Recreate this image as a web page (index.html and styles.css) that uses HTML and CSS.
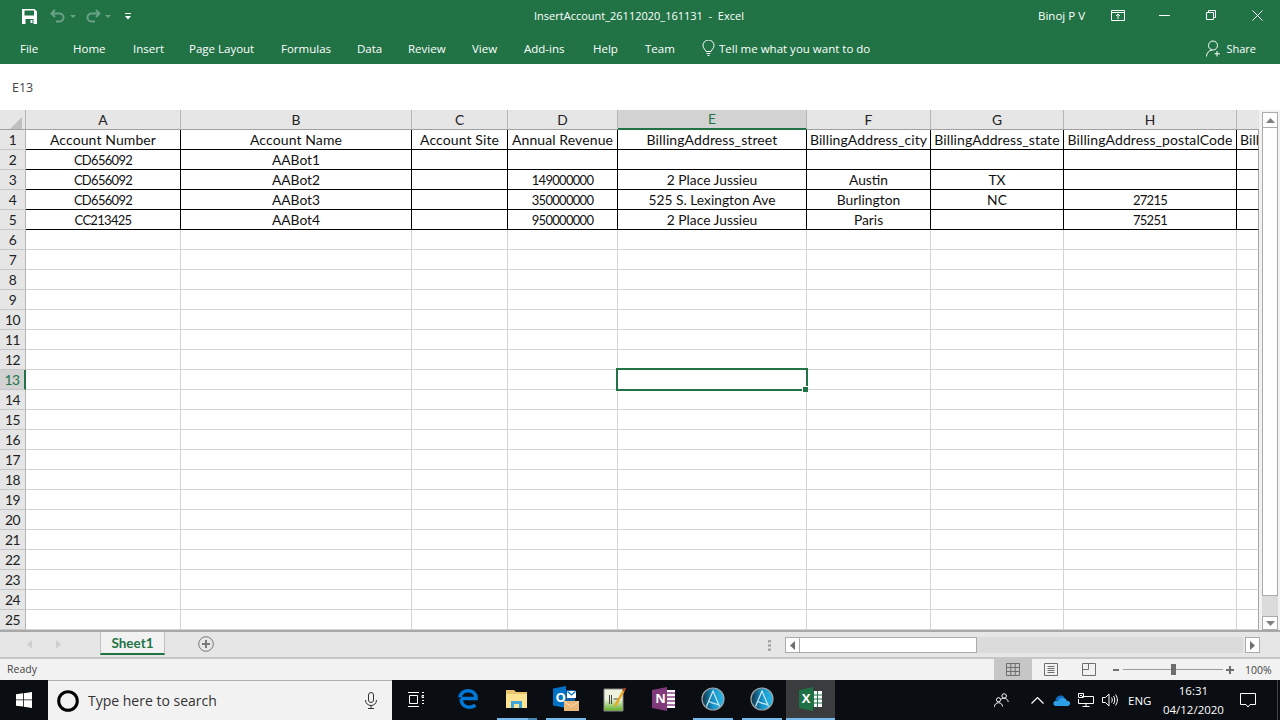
FILE: index.html
```html
<!DOCTYPE html>
<html lang="en">
<head>
<meta charset="utf-8">
<title>InsertAccount_26112020_161131 - Excel</title>
<link rel="stylesheet" href="styles.css">
</head>
<body>
<div class="app">
  <header class="titlebar">
    <div class="qat">
      <svg class="i-save" width="15" height="15" viewBox="0 0 15 15"><path fill="#fff" d="M0 0h12.500L15 2.500V15H0z"/><path fill="#217346" d="M2.500 1.500h9.500v5h-9.500zM3.500 10h8v5h-8z"/><path fill="#fff" d="M8.500 11h2v3h-2z"/></svg>
      <svg class="i-undo" width="16" height="14" viewBox="0 0 16 14" fill="none" stroke="#6aa287" stroke-width="2"><path d="M5 1 1.500 4.500 5 8M2 4.500h7.500a4 4 0 0 1 0 8H6"/></svg>
      <svg class="i-caret" width="6" height="4" viewBox="0 0 6 4"><path fill="#6aa287" d="M0 0h6L3 3z"/></svg>
      <svg class="i-redo" width="16" height="14" viewBox="0 0 16 14" fill="none" stroke="#6aa287" stroke-width="2"><path d="M11 1l3.500 3.500L11 8M14 4.500H6.500a4 4 0 0 0 0 8H10"/></svg>
      <svg class="i-caret" width="6" height="4" viewBox="0 0 6 4"><path fill="#6aa287" d="M0 0h6L3 3z"/></svg>
      <svg class="i-custom" width="6" height="7" viewBox="0 0 6 7"><path fill="#fff" d="M0 0h6v1H0zM0 3h6L3 6.500z"/></svg>
    </div>
    <div class="doc-title">InsertAccount_26112020_161131  -  Excel</div>
    <div class="win">
      <span class="user">Binoj P V</span>
      <svg class="i-display" width="14" height="11" viewBox="0 0 14 11" fill="none" stroke="#fff"><path d="M.5.500h13v10H.500zM.5 2.500h13M7 9V4.500M5 6l2-2 2 2"/></svg>
      <svg class="i-min" width="11" height="1" viewBox="0 0 11 1"><path fill="#fff" d="M0 0h11v1H0z"/></svg>
      <svg class="i-restore" width="10" height="10" viewBox="0 0 10 10" fill="none" stroke="#fff"><path d="M.5 2.500h7v7h-7zM2.500 2.500v-2h7v7h-2"/></svg>
      <svg class="i-close" width="11" height="11" viewBox="0 0 11 11" fill="none" stroke="#fff"><path d="M.5.500l10 10M10.500.500l-10 10"/></svg>
    </div>
  </header>

  <nav class="ribbon">
    <span>File</span><span>Home</span><span>Insert</span><span>Page Layout</span><span>Formulas</span><span>Data</span><span>Review</span><span>View</span><span>Add-ins</span><span>Help</span><span>Team</span>
    <span class="tell">
      <svg width="13" height="16" viewBox="0 0 13 16" fill="none" stroke="#fff"><path d="M4 11.500C3.500 9.500 1 8.500 1 5.500a5.500 5.500 0 0 1 11 0c0 3-2.500 4-3 6zM4.500 13.500h4M5.500 15.500h2"/></svg>
      Tell me what you want to do
    </span>
    <span class="share">
      <svg width="15" height="17" viewBox="0 0 15 17" fill="none" stroke="#fff"><circle cx="7" cy="5.500" r="4.500"/><path d="M.5 16.500c0-3.500 2.500-6 5.500-6.500M11 11v5.500M8.500 13.800h5.500"/></svg>
      <span class="share-label">Share</span>
    </span>
  </nav>

  <div class="formula"><span>E13</span></div>

  <div class="sheet">
    <table class="grid">
      <colgroup>
        <col class="c0"><col class="ca"><col class="cb"><col class="cc"><col class="cd"><col class="ce"><col class="cf"><col class="cg"><col class="ch"><col class="ci">
      </colgroup>
      <thead>
        <tr>
          <th class="corner"><svg width="12" height="12" viewBox="0 0 12 12"><path fill="#c0c0c0" d="M12 0v12H0z"/></svg></th>
          <th>A</th><th>B</th><th>C</th><th>D</th><th class="on">E</th><th>F</th><th>G</th><th>H</th><th></th>
        </tr>
      </thead>
      <tbody>
        <tr class="d head"><th>1</th><td>Account Number</td><td>Account Name</td><td>Account Site</td><td>Annual Revenue</td><td>BillingAddress_street</td><td>BillingAddress_city</td><td>BillingAddress_state</td><td>BillingAddress_postalCode</td><td class="clip">Bill</td></tr>
        <tr class="d"><th>2</th><td class="num">CD656092</td><td>AABot1</td><td></td><td></td><td></td><td></td><td></td><td></td><td></td></tr>
        <tr class="d"><th>3</th><td class="num">CD656092</td><td>AABot2</td><td></td><td class="num">149000000</td><td>2 Place Jussieu</td><td>Austin</td><td>TX</td><td></td><td></td></tr>
        <tr class="d"><th>4</th><td class="num">CD656092</td><td>AABot3</td><td></td><td class="num">350000000</td><td>525 S. Lexington Ave</td><td>Burlington</td><td>NC</td><td class="num">27215</td><td></td></tr>
        <tr class="d"><th>5</th><td class="num">CC213425</td><td>AABot4</td><td></td><td class="num">950000000</td><td>2 Place Jussieu</td><td>Paris</td><td></td><td class="num">75251</td><td></td></tr>
        <tr><th>6</th><td></td><td></td><td></td><td></td><td></td><td></td><td></td><td></td><td></td></tr>
        <tr><th>7</th><td></td><td></td><td></td><td></td><td></td><td></td><td></td><td></td><td></td></tr>
        <tr><th>8</th><td></td><td></td><td></td><td></td><td></td><td></td><td></td><td></td><td></td></tr>
        <tr><th>9</th><td></td><td></td><td></td><td></td><td></td><td></td><td></td><td></td><td></td></tr>
        <tr><th>10</th><td></td><td></td><td></td><td></td><td></td><td></td><td></td><td></td><td></td></tr>
        <tr><th>11</th><td></td><td></td><td></td><td></td><td></td><td></td><td></td><td></td><td></td></tr>
        <tr><th>12</th><td></td><td></td><td></td><td></td><td></td><td></td><td></td><td></td><td></td></tr>
        <tr><th class="on-row">13</th><td></td><td></td><td></td><td></td><td class="active"><div class="sel"><i class="handle"></i></div></td><td></td><td></td><td></td><td></td></tr>
        <tr><th>14</th><td></td><td></td><td></td><td></td><td></td><td></td><td></td><td></td><td></td></tr>
        <tr><th>15</th><td></td><td></td><td></td><td></td><td></td><td></td><td></td><td></td><td></td></tr>
        <tr><th>16</th><td></td><td></td><td></td><td></td><td></td><td></td><td></td><td></td><td></td></tr>
        <tr><th>17</th><td></td><td></td><td></td><td></td><td></td><td></td><td></td><td></td><td></td></tr>
        <tr><th>18</th><td></td><td></td><td></td><td></td><td></td><td></td><td></td><td></td><td></td></tr>
        <tr><th>19</th><td></td><td></td><td></td><td></td><td></td><td></td><td></td><td></td><td></td></tr>
        <tr><th>20</th><td></td><td></td><td></td><td></td><td></td><td></td><td></td><td></td><td></td></tr>
        <tr><th>21</th><td></td><td></td><td></td><td></td><td></td><td></td><td></td><td></td><td></td></tr>
        <tr><th>22</th><td></td><td></td><td></td><td></td><td></td><td></td><td></td><td></td><td></td></tr>
        <tr><th>23</th><td></td><td></td><td></td><td></td><td></td><td></td><td></td><td></td><td></td></tr>
        <tr><th>24</th><td></td><td></td><td></td><td></td><td></td><td></td><td></td><td></td><td></td></tr>
        <tr><th>25</th><td></td><td></td><td></td><td></td><td></td><td></td><td></td><td></td><td></td></tr>
      </tbody>
    </table>
    <div class="vscroll">
      <div class="sb-btn up"><svg width="9" height="5" viewBox="0 0 9 5"><path fill="#808080" d="M4.500 0 9 5H0z"/></svg></div>
      <div class="sb-thumb"></div>
      <div class="sb-track"></div>
      <div class="sb-btn down"><svg width="9" height="5" viewBox="0 0 9 5"><path fill="#808080" d="M0 0h9L4.500 5z"/></svg></div>
    </div>
  </div>

  <div class="tabs">
    <div class="nav-arrows">
      <svg width="5" height="9" viewBox="0 0 5 9"><path fill="#cfcfcf" d="M5 0v9L0 4.500z"/></svg>
      <svg width="5" height="9" viewBox="0 0 5 9"><path fill="#cfcfcf" d="M0 0v9l5-4.500z"/></svg>
    </div>
    <div class="tab">Sheet1</div>
    <svg class="add" width="16" height="16" viewBox="0 0 16 16" fill="none" stroke="#7a7a7a"><circle cx="8" cy="8" r="7.300"/><path stroke-width="2" d="M8 4v8M4 8h8"/></svg>
    <svg class="dots" width="3" height="11" viewBox="0 0 3 11"><path fill="#a8a8a8" d="M0 0h3v2.500H0zM0 4.200h3v2.500H0zM0 8.500h3V11H0z"/></svg>
    <div class="hscroll">
      <div class="sb-btn left"><svg width="5" height="9" viewBox="0 0 5 9"><path fill="#6e6e6e" d="M5 0v9L0 4.500z"/></svg></div>
      <div class="h-thumb"></div>
      <div class="h-track"></div>
      <div class="sb-btn right"><svg width="5" height="9" viewBox="0 0 5 9"><path fill="#6e6e6e" d="M0 0v9l5-4.500z"/></svg></div>
    </div>
  </div>

  <footer class="status">
    <span class="ready">Ready</span>
    <div class="views">
      <div class="view on"><svg width="14" height="13" viewBox="0 0 14 13" fill="none" stroke="#6e6e6e"><path d="M.5.500h13v12H.500zM.5 4.500h13M.5 8.500h13M4.800.500v12M9.200.500v12"/></svg></div>
      <div class="view"><svg width="14" height="13" viewBox="0 0 14 13" fill="none" stroke="#6e6e6e"><path d="M.5.500h13v12H.500zM3.500 3.500h7M3.500 5.500h7M3.500 7.500h7M3.500 9.500h7"/></svg></div>
      <div class="view"><svg width="14" height="13" viewBox="0 0 14 13" fill="none" stroke="#6e6e6e"><path d="M.5.500h13v12H.500zM6.500.500v6h-6"/></svg></div>
    </div>
    <div class="zoom">
      <svg width="6" height="2" viewBox="0 0 6 2"><path fill="#6e6e6e" d="M0 0h6v2H0z"/></svg>
      <div class="slider"><i class="knob"></i></div>
      <svg width="8" height="8" viewBox="0 0 8 8"><path fill="#6e6e6e" d="M3 0h2v3h3v2H5v3H3V5H0V3h3z"/></svg>
      <span class="pct">100%</span>
    </div>
  </footer>

  <div class="taskbar">
    <div class="start"><svg width="16" height="16" viewBox="0 0 16 16"><path fill="#fff" d="M0 2.300 7 1.300v6.200H0zM7.800 1.200 16 0v7.500H7.800zM0 8.300h7v6.300L0 13.700zM7.800 8.300H16V16l-8.200-1.200z"/></svg></div>
    <div class="search">
      <svg width="22" height="22" viewBox="0 0 22 22" fill="none"><circle cx="11" cy="11" r="9.300" stroke="#000" stroke-width="3"/></svg>
      <span class="ph">Type here to search</span>
      <svg class="mic" width="12" height="17" viewBox="0 0 12 17" fill="none" stroke="#333"><rect x="3.500" y=".5" width="5" height="10" rx="2.500"/><path d="M.5 8c0 3.500 2.500 5.500 5.500 5.500s5.500-2 5.500-5.500M6 13.500v3M3 16.500h6"/></svg>
    </div>
    <div class="apps">
      <div class="app-btn tv"><svg width="16" height="15" viewBox="0 0 16 15" fill="none" stroke="#fff"><path d="M0 .5h11M0 14.500h11M1.500 3.500h8v8h-8zM14 .5h2M14 3.500h2v2h-2zM14 8.500h2M14 11.500h2"/></svg></div>
      <div class="app-btn"><svg width="20" height="20" viewBox="0 0 20 20" fill="none" stroke="#0078d7" stroke-width="3.600"><path d="M3 9.500h15c.3-4.500-3-7.700-7.500-7.700C6 1.800 2.800 4.700 1.800 8.500M3.300 9.800c-.3 5 3 8.400 7.500 8.400 2.700 0 4.800-.7 6.700-2"/></svg></div>
      <div class="app-btn open-split"><svg width="22" height="20" viewBox="0 0 22 20"><path fill="#e8c56d" d="M0 1h8l2 2h11v16H0z"/><path fill="#fde391" d="M0 5h21v14H0z"/><path fill="#3fa6dd" d="M5 12h11v7h-3v-4H8v4H5z"/></svg></div>
      <div class="app-btn open"><svg width="26" height="26" viewBox="0 0 26 26"><path fill="#0072c6" d="M0 2.500 13 0v22L0 19.500z"/><path fill="#0f5ea5" d="M13 4h9v14h-9z"/><text x="2.500" y="15.500" class="glyph-o">O</text><path fill="#fff" d="M14 5h9v7h-9z"/><path fill="none" stroke="#0072c6" stroke-width="1.300" d="M14.500 5.500l4 3.500 4-3.500"/><path fill="#edb778" d="M11 15h15v10H11z"/><path fill="none" stroke="#fbe0bd" d="M11 15.500l7.500 5 7.500-5"/></svg></div>
      <div class="app-btn"><svg width="24" height="26" viewBox="0 0 24 26"><defs><linearGradient id="pad" x1="0" y1="0" x2="0" y2="1"><stop offset=".45" stop-color="#eef3df"/><stop offset="1" stop-color="#5fae23"/></linearGradient></defs><path fill="url(#pad)" stroke="#8a8a8a" d="M1 3h19v22H1z"/><path stroke="#444" fill="none" d="M6.500 9v9M8.500 9v9M10.500 13h5"/><path stroke="#e8a823" stroke-width="2.500" d="M12 20 21 4"/><path stroke="#b0432a" stroke-width="2.500" d="M20.500 5 22 2"/></svg></div>
      <div class="app-btn"><svg width="23" height="24" viewBox="0 0 23 24"><path fill="#fff" d="M12 3h11v18H12z"/><path fill="#80397b" d="M15 5h8v2h-8zM15 9h8v2h-8zM15 13h8v2h-8zM15 17h8v2h-8z" opacity=".7"/><path fill="#80397b" d="M0 3 15 0v24L0 21z"/><text x="3.300" y="16" class="glyph-n">N</text></svg></div>
      <div class="app-btn open"><svg width="24" height="24" viewBox="0 0 24 24"><defs><linearGradient id="aq" x1="0" y1="0" x2="1" y2="0"><stop offset="0" stop-color="#123042"/><stop offset=".5" stop-color="#1793c9"/><stop offset="1" stop-color="#2cb9e6"/></linearGradient></defs><circle cx="12" cy="12" r="11" fill="url(#aq)" stroke="#a0a5a8" stroke-width="1.200"/><path fill="none" stroke="#cfeaf5" stroke-width="1.200" d="M5.500 19.500 12 4l6.500 15.500M8 14.500c3 1.500 6 2.500 9 3"/></svg></div>
      <div class="app-btn open"><svg width="24" height="24" viewBox="0 0 24 24"><circle cx="12" cy="12" r="11" fill="url(#aq)" stroke="#a0a5a8" stroke-width="1.200"/><path fill="none" stroke="#cfeaf5" stroke-width="1.200" d="M5.500 19.500 12 4l6.500 15.500M8 14.500c3 1.500 6 2.500 9 3"/></svg></div>
      <div class="app-btn active"><svg width="23" height="24" viewBox="0 0 23 24"><path fill="#fff" d="M11 4h12v16H11z"/><path fill="none" stroke="#217346" d="M14.500 4v16M18.500 4v16M11 8h12M11 12h12M11 16h12"/><path fill="#1e7145" d="M0 3 14 0v24L0 21z"/><text x="2.800" y="16" class="glyph-x">X</text></svg></div>
    </div>
    <div class="tray">
      <svg class="t-people" width="15" height="15" viewBox="0 0 20 19" fill="none" stroke="#fff" stroke-width="1.300"><circle cx="13.500" cy="3.500" r="3"/><circle cx="6" cy="8.500" r="2.800"/><path d="M.5 18c0-3 2.200-5.500 5.500-5.500s5 2 5.500 5M9.500 7.500c1-.7 2.500-1 4-1 3 0 5 2 5.500 5"/></svg>
      <svg class="t-chev" width="13" height="7" viewBox="0 0 13 7" fill="none" stroke="#fff" stroke-width="1.200"><path d="M.5 6.500l6-6 6 6"/></svg>
      <svg class="t-cloud" width="17" height="11" viewBox="0 0 17 11"><path fill="#0f6fc6" d="M2.500 5C3 1.500 6 0 8.500 .5 10 .8 11 1.500 11.500 3 9 3 6 3.500 5.500 6z"/><path fill="#2d9fe6" d="M3 11C0 11-.5 7 2 6c.7-.3 2-.3 3 0 1-2.500 3-3 5-3 2.500 0 3.500 1.500 4 3 2-.3 3.500 1 3 3-.3 1.300-1.300 2-2.500 2z"/></svg>
      <svg class="t-net" width="16" height="14" viewBox="0 0 16 14" fill="none" stroke="#fff"><path d="M4 3.500h11.500v7H.5V6M8 10.500v3M4.500 13.500h7"/><path d="M.5.500h5v4h-5z"/><path d="M2 2.500h2"/></svg>
      <svg class="t-vol" width="16" height="14" viewBox="0 0 16 14" fill="none" stroke="#fff"><path d="M.5 4.500h3l3.500-3.500v12L3.500 9.500h-3zM9.500 4.500c1 1.500 1 3.500 0 5M11.500 3c1.700 2.500 1.700 5.500 0 8M13.500 1.500c2.500 3.500 2.500 7.500 0 11"/></svg>
      <span class="lang">ENG</span>
      <div class="clock"><span>16:31</span><span>04/12/2020</span></div>
      <svg class="t-note" width="16" height="15" viewBox="0 0 16 15" fill="none" stroke="#fff"><path d="M.5.500h15v11H10l-2 2.500-2-2.500H.5z"/></svg>
      <i class="peek"></i>
    </div>
  </div>
</div>
</body>
</html>
```
FILE: styles.css
```css
* { box-sizing: border-box; }
html, body { margin: 0; padding: 0; }
body { width: 1280px; height: 720px; overflow: hidden; background: #fff; font-family: "Open Sans", "Liberation Sans", sans-serif; }
.app { width: 1280px; height: 720px; display: flex; flex-direction: column; }

/* Title bar */
.titlebar { height: 32px; background: #217346; color: #fff; display: grid; grid-template-columns: 1fr auto 1fr; align-items: center; font-size: 11.500px; }
.qat { display: flex; align-items: center; padding-left: 22px; }
.i-undo { margin-left: 13px; }
.i-caret { margin-left: 4px; margin-top: 2px; }
.i-redo { margin-left: 9px; }
.i-custom { margin-left: 14px; }
.doc-title { white-space: pre; font-size: 11px; margin: -2px 2px 0 0; }
.win { display: flex; align-items: center; justify-content: flex-end; padding-right: 17px; margin-top: -2px; }
.user { margin-right: 26px; }
.i-display { margin-right: 34px; }
.i-min { margin-right: 36px; }
.i-restore { margin-right: 36px; }

/* Ribbon tabs */
.ribbon { height: 32px; background: #217346; color: #fff; display: grid; grid-template-columns: 53px 60px 56px 92px 76px 51px 64px 52px 69px 52px 57px 1fr auto; align-items: center; padding-left: 20px; padding-right: 24px; font-size: 11.500px; }
.tell { display: flex; align-items: center; gap: 4px; }
.share { display: flex; align-items: center; gap: 5px; }
.share-label { font-size: 11px; }

/* Formula */
.formula { height: 46px; background: #fff; display: flex; align-items: center; padding-left: 12px; font-size: 12.500px; color: #444; }

/* Sheet */
.sheet { height: 520px; display: flex; background: #f2f2f2; overflow: hidden; }
.grid { table-layout: fixed; width: 1259px; border-collapse: separate; border-spacing: 0; font-family: Lato, "Liberation Sans", sans-serif; font-size: 13.800px; color: #111; background: #fff; }
.c0 { width: 26px; } .ca { width: 155px; } .cb { width: 231px; } .cc { width: 96px; } .cd { width: 110px; }
.ce { width: 189px; } .cf { width: 124px; } .cg { width: 133px; } .ch { width: 173px; } .ci { width: 22px; }
.grid tr { height: 20px; }
.grid th, .grid td { height: 20px; padding: 0; font-weight: 400; text-align: center; white-space: nowrap; overflow: hidden; border-right: 1px solid #d4d4d4; border-bottom: 1px solid #d4d4d4; line-height: 18px; }
.grid td { padding-top: 1px; }
.grid thead th { background: #e6e6e6; border-right: 1px solid #b4b4b4; border-bottom: 1px solid #a0a0a0; color: #222; }
.grid thead th:last-child { border-right: 0; }
.grid thead th.on { background: #d2d2d2; color: #217346; border-bottom: 2px solid #217346; }
.corner { text-align: right !important; padding-right: 3px !important; line-height: 0 !important; vertical-align: bottom; }
.corner svg { margin-top: 3px; }
.grid tbody th { background: #e6e6e6; border-right: 1px solid #b4b4b4; border-bottom: 1px solid #c6c6c6; color: #222; letter-spacing: -.5px; }
.grid tbody th.on-row { background: #d2d2d2; color: #217346; border-right: 2px solid #217346; }
.grid tr.d td { border-right-color: #000; border-bottom-color: #000; }
.grid tr.head td { font-size: 14px; letter-spacing: .1px; }
.grid td.num { font-size: 13px; letter-spacing: -.7px; }
.grid tbody td:last-child { border-right-color: #a5a5a5 !important; }
.grid td.clip { text-align: left; padding-left: 3px; letter-spacing: 0; }
.grid td.active { position: relative; overflow: visible; }
.sel { position: absolute; left: -2px; top: -2px; width: 192px; height: 23px; border: 2px solid #217346; pointer-events: none; }
.handle { position: absolute; right: -2px; bottom: -3px; width: 6px; height: 6px; background: #217346; border: 1px solid #fff; border-right: 0; border-bottom: 0; }

/* Vertical scrollbar */
.vscroll { width: 21px; padding: 2px 2px 0 3px; display: flex; flex-direction: column; }
.sb-btn { background: #fff; border: 1px solid #ababab; display: flex; align-items: center; justify-content: center; flex: none; }
.sb-btn.up { height: 16px; }
.sb-btn.down { height: 14px; }
.sb-thumb { height: 468px; background: #fff; border: 1px solid #ababab; border-top: 0; }
.sb-track { height: 20px; background: #dbdbdb; }

/* Tabs bar */
.tabs { height: 29px; background: #e6e6e6; border-top: 2px solid #a8a8a8; border-bottom: 2px solid #c6c6c6; display: flex; align-items: flex-start; position: relative; }
.nav-arrows { display: flex; gap: 24px; width: 100px; padding: 8px 0 0 27px; }
.tab { width: 65px; height: 23px; background: #f2f2f2; border-left: 1px solid #c0c0c0; border-right: 1px solid #c0c0c0; border-bottom: 2px solid #217346; color: #217346; font-family: Lato, "Liberation Sans", sans-serif; font-weight: 700; font-size: 13.500px; text-align: center; line-height: 22px; }
.add { margin: 4px 0 0 33px; }
.dots { margin: 8px 0 0 554px; }
.hscroll { display: flex; margin: 5px 0 0 14px; height: 16px; }
.sb-btn.left { width: 15px; }
.sb-btn.right { width: 15px; margin-left: 2px; }
.h-thumb { width: 177px; background: #fff; border: 1px solid #ababab; border-left: 0; }
.h-track { width: 266px; background: #dbdbdb; }

/* Status bar */
.status { height: 21px; background: #f2f2f2; display: flex; align-items: center; font-size: 10.500px; color: #444; padding-left: 7px; }
.ready { width: 987px; margin-top: -2px; }
.views { display: flex; height: 21px; }
.view { width: 38px; display: flex; align-items: center; justify-content: center; }
.view.on { background: #c6c6c6; }
.zoom { display: flex; align-items: center; margin-left: 5px; }
.slider { width: 100px; height: 1px; background: #9a9a9a; margin: 0 3px 0 4px; position: relative; }
.knob { position: absolute; left: 48px; top: -5px; width: 5px; height: 11px; background: #6e6e6e; }
.pct { margin-left: 11px; }

/* Taskbar */
.taskbar { height: 40px; background: #0a0d12; display: flex; color: #fff; }
.start { width: 48px; display: flex; align-items: center; justify-content: center; }
.search { width: 344px; background: #f2f2f2; border-top: 1px solid #b0b0b0; display: flex; align-items: center; padding-left: 9px; color: #333; font-size: 14px; }
.ph { margin-left: 9px; flex: 1; margin-top: -1px; }
.mic { margin-right: 15px; }
.apps { display: flex; margin-left: 2px; }
.app-btn { width: 49px; display: flex; align-items: center; justify-content: center; position: relative; padding-bottom: 2px; }
.app-btn.tv { padding-right: 5px; }
.app-btn.open::after, .app-btn.open-split::after { content: ""; position: absolute; left: 5px; right: 4px; bottom: 0; height: 2px; background: #76b9ed; }
.app-btn.open-split::after { background: linear-gradient(to right, #76b9ed 78%, #4a87b4 78%); }
.app-btn.active { background: #3a3c3e; }
.app-btn.active::after { content: ""; position: absolute; left: 0; right: 0; bottom: 0; height: 2px; background: #76b9ed; }
.glyph-o, .glyph-n, .glyph-x { fill: #fff; font-family: "Open Sans", sans-serif; font-weight: 700; font-size: 13px; }
.tray { flex: 1; display: flex; align-items: center; position: relative; font-size: 11.500px; padding-left: 159px; }
.t-chev { margin-left: 22px; }
.t-cloud { margin-left: 9px; }
.t-net { margin-left: 8px; }
.t-vol { margin-left: 8px; }
.lang { margin-left: 10px; }
.clock { width: 60px; margin-left: 12px; display: flex; flex-direction: column; align-items: center; line-height: 19px; }
.t-note { margin-left: 17px; }
.peek { position: absolute; right: 2px; top: 0; bottom: 0; width: 1px; background: #444; }
```
